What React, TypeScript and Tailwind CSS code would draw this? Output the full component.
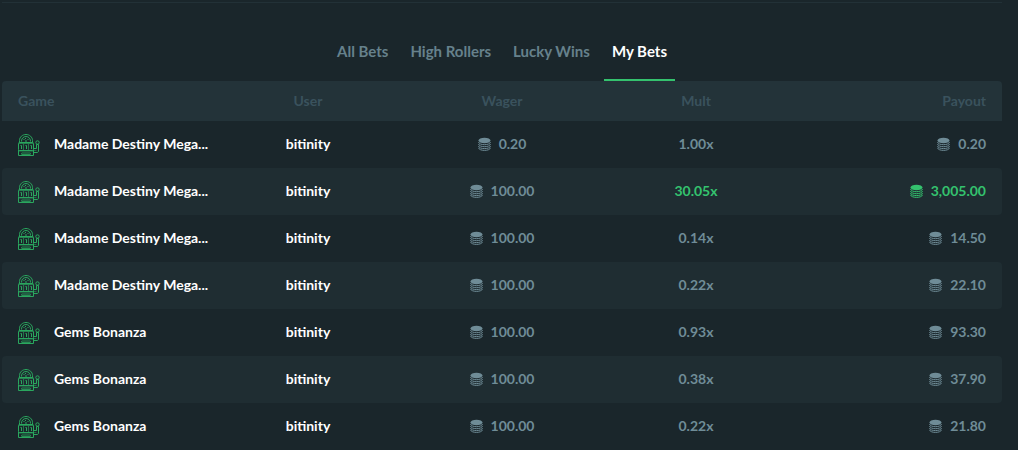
import React from 'react';

interface Bet {
  game: string;
  user: string;
  wager: string;
  mult: string;
  payout: string;
  win?: boolean;
}

const tabs = ['All Bets', 'High Rollers', 'Lucky Wins', 'My Bets'];
const activeTab = 'My Bets';

const bets: Bet[] = [
  { game: 'Madame Destiny Mega...', user: 'bitinity', wager: '0.20', mult: '1.00x', payout: '0.20' },
  { game: 'Madame Destiny Mega...', user: 'bitinity', wager: '100.00', mult: '30.05x', payout: '3,005.00', win: true },
  { game: 'Madame Destiny Mega...', user: 'bitinity', wager: '100.00', mult: '0.14x', payout: '14.50' },
  { game: 'Madame Destiny Mega...', user: 'bitinity', wager: '100.00', mult: '0.22x', payout: '22.10' },
  { game: 'Gems Bonanza', user: 'bitinity', wager: '100.00', mult: '0.93x', payout: '93.30' },
  { game: 'Gems Bonanza', user: 'bitinity', wager: '100.00', mult: '0.38x', payout: '37.90' },
  { game: 'Gems Bonanza', user: 'bitinity', wager: '100.00', mult: '0.22x', payout: '21.80' },
];

const SlotIcon: React.FC = () => (
  <svg className="w-[22px] h-[22px] shrink-0 text-[#2aa75e]" viewBox="0 0 22 22" fill="none" stroke="currentColor" strokeWidth="1" aria-hidden="true">
    <path d="M1.5 8.5V6.5c0-3.5 3-6 6.5-6s6.5 2.5 6.5 6v2" />
    <path d="M3.5 7.5V7c0-2.500 2-4.500 4.500-4.500s4.500 2 4.500 4.500v.5" />
    <path d="M5.5 5.5h1M7.500 4v1M9.500 5.500h1M7 7h2" />
    <path d="M1 9h14" strokeWidth="2" strokeOpacity="0.7" />
    <rect x="0.5" y="8.5" width="15" height="8" rx="1" />
    <path d="M5.5 10v6M10.5 10v6" strokeOpacity="0.6" />
    <path d="M2.500 11.500h1v3.500M7.500 11.500h1v3.500M12.500 11.500h1v3.500" />
    <path d="M0.5 16v5.5h15V16" />
    <path d="M1 17h14" strokeOpacity="0.7" />
    <rect x="3.5" y="19" width="9" height="1.5" rx="0.5" strokeWidth="0.8" />
    <path d="M15.5 14.500h3V10.500h2V17c0 .9-.6 1.500-1.500 1.500h-3.500" />
    <path d="M16 16.500h2.500" strokeOpacity="0.5" />
    <circle cx="19.5" cy="8.5" r="1.7" />
  </svg>
);

const CoinsIcon: React.FC = () => (
  <svg className="w-[13px] h-[14px] shrink-0" viewBox="0 0 13 14" fill="none" stroke="currentColor" strokeWidth="1" aria-hidden="true">
    <ellipse cx="6.5" cy="3.5" rx="6" ry="2.8" fill="currentColor" stroke="none" />
    <path d="M0.500 5c.4 1.700 3 2.700 6 2.700s5.600-1 6-2.700" />
    <path d="M0.500 7c.4 1.700 3 2.700 6 2.700s5.600-1 6-2.700" />
    <path d="M0.500 9c.4 1.700 3 2.600 6 2.600s5.600-.9 6-2.600" />
    <path d="M0.500 10.800c.4 1.700 3 2.600 6 2.600s5.600-.9 6-2.600" />
  </svg>
);

const Amount: React.FC<{ value: string }> = ({ value }) => (
  <span className="inline-flex items-center gap-2 align-middle">
    <CoinsIcon />
    {value}
  </span>
);

const BetRow: React.FC<{ bet: Bet }> = ({ bet }) => (
  <tr className="h-[47px] text-[#6f8c97] even:bg-[#1f2d32] [&>td+td]:pb-0.5">
    <td className="pl-4 rounded-l">
      <div className="flex items-start gap-[14px] text-white whitespace-nowrap">
        <SlotIcon />
        {bet.game}
      </div>
    </td>
    <td className="text-center text-white">{bet.user}</td>
    <td className="text-center"><Amount value={bet.wager} /></td>
    <td className={`text-center ${bet.win ? 'text-[#34c26e]' : ''}`}>{bet.mult}</td>
    <td className={`pr-4 text-right rounded-r ${bet.win ? 'text-[#34c26e]' : ''}`}><Amount value={bet.payout} /></td>
  </tr>
);

const App: React.FC = () => (
  <main className="min-h-screen bg-[#1a262b] pt-0.5 pl-0.5 pr-4 text-sm font-bold font-['Lato',sans-serif]">
    <div className="h-px bg-[#223137]" />
    <nav className="flex justify-center gap-1.5 pt-5">
      {tabs.map((tab) => (
        <button
          key={tab}
          type="button"
          className={`h-[58px] px-2 pt-0.5 text-[15px] border-b-2 ${tab === activeTab ? 'text-white border-[#34c26e]' : 'text-[#66818c] border-transparent'}`}
        >
          {tab}
        </button>
      ))}
    </nav>
    <table className="w-full table-fixed border-separate border-spacing-0">
      <colgroup>
        <col />
        <col className="w-[19.4%]" />
        <col className="w-[19.4%]" />
        <col className="w-[19.4%]" />
        <col />
      </colgroup>
      <thead>
        <tr className="h-10 bg-[#233339] text-[#3a525d]">
          <th className="pl-4 text-left rounded-tl">Game</th>
          <th>User</th>
          <th>Wager</th>
          <th>Mult</th>
          <th className="pr-4 text-right rounded-tr">Payout</th>
        </tr>
      </thead>
      <tbody>
        {bets.map((bet, i) => (
          <BetRow key={i} bet={bet} />
        ))}
      </tbody>
    </table>
  </main>
);

export default App;
